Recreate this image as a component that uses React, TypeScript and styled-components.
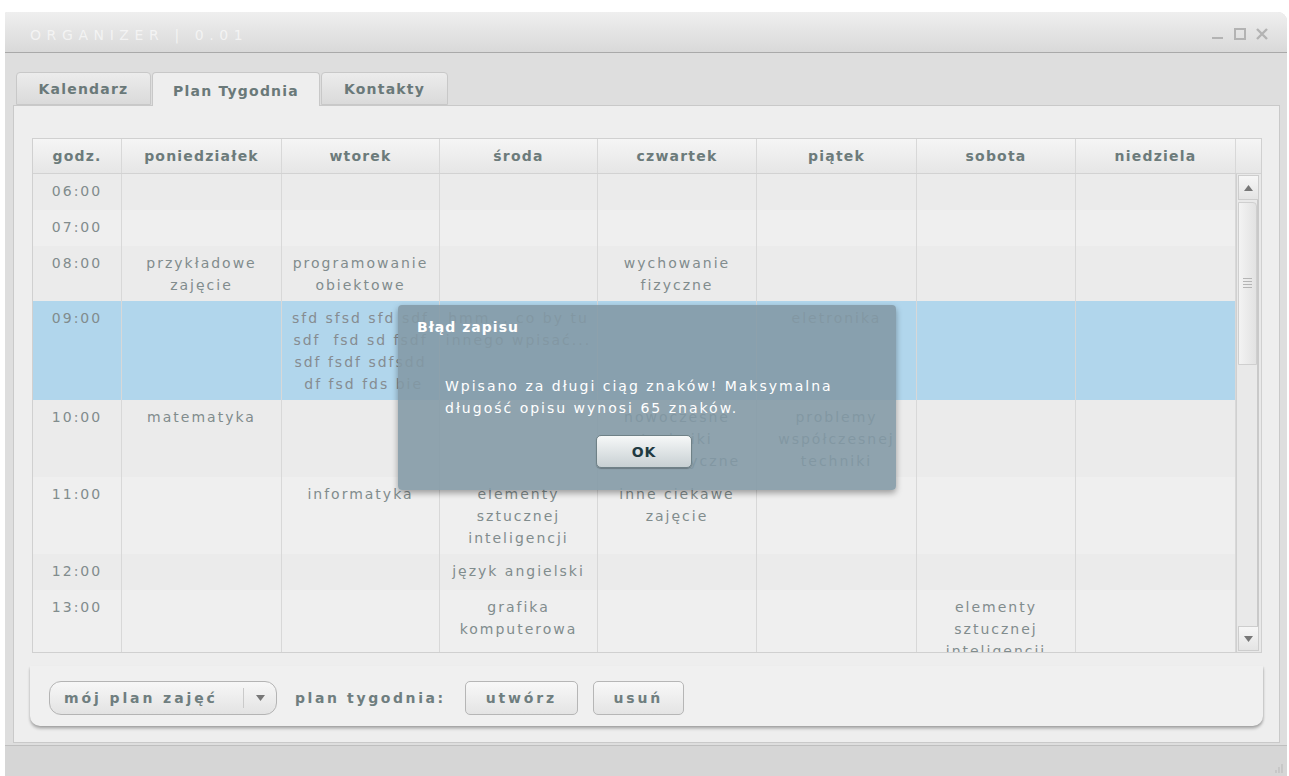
import styled, { createGlobalStyle } from 'styled-components';

const GlobalStyle = createGlobalStyle`
  html, body {
    margin: 0;
    padding: 0;
    background: #ffffff;
  }
  body {
    font-family: "DejaVu Sans", Verdana, sans-serif;
  }
`;

const COLS = '89px 160px 158px 158px 159px 160px 159px 160px';

const days = ['poniedziałek', 'wtorek', 'środa', 'czwartek', 'piątek', 'sobota', 'niedziela'];

type PlanRow = { time: string; cells: string[]; selected?: boolean };

const plan: PlanRow[] = [
  { time: '06:00', cells: ['', '', '', '', '', '', ''] },
  { time: '07:00', cells: ['', '', '', '', '', '', ''] },
  {
    time: '08:00',
    cells: ['przykładowe\nzajęcie', 'programowanie\nobiektowe', '', 'wychowanie\nfizyczne', '', '', ''],
  },
  {
    time: '09:00',
    selected: true,
    cells: [
      '',
      'sfd sfsd sfd sdf\nsdf  fsd sd fsdf\nsdf fsdf sdfsdd\n df fsd fds bie',
      'hmm... co by tu\ninnego wpisać...',
      '',
      'eletronika',
      '',
      '',
    ],
  },
  {
    time: '10:00',
    cells: ['matematyka', '', '', 'nowoczesne\ntechniki\ninformatyczne', 'problemy\nwspółczesnej\ntechniki', '', ''],
  },
  {
    time: '11:00',
    cells: ['', 'informatyka', 'elementy\nsztucznej\ninteligencji', 'inne ciekawe\nzajęcie', '', '', ''],
  },
  { time: '12:00', cells: ['', '', 'język angielski', '', '', '', ''] },
  {
    time: '13:00',
    cells: ['', '', 'grafika\nkomputerowa', '', '', 'elementy\nsztucznej\ninteligencji', ''],
  },
];

const Screen = styled.div`
  position: relative;
  padding: 12px 2px 0 5px;
  height: 776px;
  box-sizing: border-box;
`;

const Window = styled.div`
  display: flex;
  flex-direction: column;
  height: 764px;
  background: #dedede;
  border-radius: 2px 9px 0 0;
  overflow: hidden;
`;

const TitleBar = styled.div`
  height: 40px;
  flex: none;
  display: flex;
  align-items: center;
  justify-content: space-between;
  padding: 0 18px 0 25px;
  background: linear-gradient(#efefef, #d9d9d9);
  border-bottom: 1px solid #a9a9a9;
`;

const Title = styled.div`
  font-size: 14px;
  letter-spacing: 5.6px;
  color: rgba(255, 255, 255, 0.6);
  padding-top: 5px;
`;

const Controls = styled.div`
  display: flex;
  align-items: center;
  gap: 8px;
  padding-top: 4px;
`;

const Body = styled.div`
  flex: 1;
  display: flex;
  flex-direction: column;
  padding: 19px 7px 0 8px;
`;

const TabRow = styled.div`
  display: flex;
  height: 33px;
  padding-left: 3px;
  gap: 1px;
  position: relative;
  z-index: 1;
`;

const Tab = styled.div<{ $active?: boolean; $w: number }>`
  width: ${(p) => p.$w}px;
  box-sizing: border-box;
  display: flex;
  align-items: center;
  justify-content: center;
  padding-top: ${(p) => (p.$active ? 3 : 0)}px;
  font-size: 14px;
  font-weight: bold;
  letter-spacing: 1.2px;
  color: #6a7979;
  border: 1px solid #c8c8c8;
  border-bottom: ${(p) => (p.$active ? 'none' : '1px solid #c8c8c8')};
  border-radius: 4px 4px 0 0;
  background: ${(p) => (p.$active ? '#eeeeee' : 'linear-gradient(#ececec, #dadada)')};
  height: ${(p) => (p.$active ? 34 : 33)}px;
`;

const Panel = styled.div`
  height: 638px;
  box-sizing: border-box;
  background: #eeeeee;
  border: 1px solid #c9c9c9;
  padding: 32px 17px 0 18px;
  display: flex;
  flex-direction: column;
`;

const TableFrame = styled.div`
  border: 1px solid #d0d0d0;
  display: flex;
  flex-direction: column;
  height: 515px;
  box-sizing: border-box;
`;

const HeaderRow = styled.div`
  display: grid;
  grid-template-columns: ${COLS} 1fr;
  height: 35px;
  flex: none;
  background: linear-gradient(#f5f5f5, #e6e6e6);
  border-bottom: 1px solid #d2d2d2;
  box-sizing: border-box;
`;

const HeadCell = styled.div`
  display: flex;
  align-items: center;
  justify-content: center;
  font-size: 14px;
  font-weight: bold;
  letter-spacing: 1.2px;
  color: #6c7b7b;
  border-right: 1px solid #d8d8d8;
  padding-bottom: 1px;
  &:last-child {
    border-right: none;
  }
`;

const BodyArea = styled.div`
  flex: 1;
  display: flex;
  min-height: 0;
`;

const Rows = styled.div`
  flex: 1;
  overflow: hidden;
`;

const Row = styled.div<{ $bg: string }>`
  display: grid;
  grid-template-columns: ${COLS};
  min-height: 36px;
  background: ${(p) => p.$bg};
`;

const Cell = styled.div<{ $dark?: boolean }>`
  border-right: 1px solid #d8d8d8;
  padding: 6px 0 5px;
  font-size: 14px;
  line-height: 22px;
  letter-spacing: 2px;
  color: ${(p) => (p.$dark ? '#868c91' : '#818c8d')};
  text-align: center;
  white-space: pre;
  overflow: hidden;
`;

const Scrollbar = styled.div`
  width: 25px;
  flex: none;
  display: flex;
  flex-direction: column;
  background: #e9e9e9;
  border-left: 1px solid #d0d0d0;
  padding: 1px 2px 1px 1px;
  box-sizing: border-box;
`;

const ScrollButton = styled.div`
  height: 25px;
  flex: none;
  display: flex;
  align-items: center;
  justify-content: center;
  background: linear-gradient(#f6f6f6, #e4e4e4);
  border: 1px solid #cdcdcd;
  box-sizing: border-box;
`;

const Track = styled.div`
  flex: 1;
  padding-top: 2px;
  border-right: 2px solid #c9c9c9;
`;

const Thumb = styled.div`
  height: 163px;
  box-sizing: border-box;
  border: 1px solid #cfcfcf;
  border-radius: 0 4px 0 0;
  background: linear-gradient(90deg, #f3f3f3, #e2e2e2);
  display: flex;
  align-items: center;
  justify-content: center;
`;

const Toolbar = styled.div`
  margin: 13px -1px 0 -2px;
  height: 60px;
  box-sizing: border-box;
  display: flex;
  align-items: center;
  padding: 3px 0 0 19px;
  background: #f0f0f0;
  border-radius: 0 0 10px 10px;
  box-shadow: 0 3px 3px rgba(0, 0, 0, 0.22), -1px 1px 2px rgba(0, 0, 0, 0.05), 1px 1px 2px rgba(0, 0, 0, 0.1);
`;

const Combo = styled.div`
  height: 34px;
  width: 228px;
  box-sizing: border-box;
  display: flex;
  align-items: center;
  border: 1px solid #b4b4b4;
  border-radius: 12px;
  background: linear-gradient(#f7f7f7, #e3e3e3);
  margin-right: 18px;
`;

const ComboText = styled.div`
  flex: 1;
  padding-left: 14px;
  font-size: 14px;
  font-weight: bold;
  letter-spacing: 2.9px;
  color: #6f7e7f;
`;

const ComboArrow = styled.div`
  width: 32px;
  height: 20px;
  border-left: 1px solid #cacaca;
  display: flex;
  align-items: center;
  justify-content: center;
`;

const ToolLabel = styled.div`
  font-size: 14px;
  font-weight: bold;
  letter-spacing: 2.6px;
  color: #6f7e7f;
  margin-right: 19px;
`;

const ToolButton = styled.div<{ $w: number }>`
  width: ${(p) => p.$w}px;
  height: 34px;
  box-sizing: border-box;
  display: flex;
  align-items: center;
  justify-content: center;
  border: 1px solid #b6b6b6;
  border-radius: 5px;
  background: linear-gradient(#f8f8f8, #e4e4e4);
  font-size: 14px;
  font-weight: bold;
  letter-spacing: 2.8px;
  color: #6f7e7f;
  margin-right: 15px;
`;

const StatusBar = styled.div`
  height: 31px;
  flex: none;
  margin-top: 2px;
  background: #d6d6d6;
  border-top: 1px solid #bfbfbf;
  display: flex;
  align-items: flex-end;
  justify-content: flex-end;
  padding: 0 4px 3px 0;
  box-sizing: border-box;
`;

const Dialog = styled.div`
  position: absolute;
  left: 398px;
  top: 305px;
  width: 498px;
  height: 185px;
  box-sizing: border-box;
  background: rgba(130, 153, 165, 0.88);
  border-radius: 4px;
  box-shadow: 0 3px 6px rgba(0, 0, 0, 0.35);
  padding: 11px 19px 0 19px;
  display: flex;
  flex-direction: column;
`;

const DialogTitle = styled.div`
  font-size: 14px;
  font-weight: bold;
  letter-spacing: 1px;
  color: #ffffff;
  line-height: 22px;
`;

const DialogText = styled.div`
  margin-top: 37px;
  padding-left: 28px;
  font-size: 14px;
  line-height: 22px;
  letter-spacing: 2px;
  color: #ffffff;
`;

const OkButton = styled.div`
  align-self: center;
  margin: 16px 0 0 -6px;
  width: 96px;
  height: 33px;
  box-sizing: border-box;
  display: flex;
  align-items: center;
  justify-content: center;
  border: 1px solid #6f8187;
  border-radius: 5px;
  background: linear-gradient(#f6f8f8, #c8d0d3);
  box-shadow: 0 1px 1px rgba(0, 0, 0, 0.25);
  font-size: 14px;
  font-weight: bold;
  letter-spacing: 1px;
  color: #1f3a41;
`;

const Arrow = ({ up }: { up?: boolean }) => (
  <svg width="9" height="6" viewBox="0 0 9 6">
    <path d={up ? 'M0 6 L4.5 0 L9 6 Z' : 'M0 0 L4.5 6 L9 0 Z'} fill="#777" />
  </svg>
);

const Grip = () => (
  <svg width="9" height="12" viewBox="0 0 9 12">
    {[0, 1, 2, 3, 4].map((i) => (
      <rect key={i} x="0" y={i * 3} width="9" height="1" fill="#b5b5b5" />
    ))}
  </svg>
);

const WindowIcons = () => (
  <Controls>
    <svg width="14" height="14" viewBox="0 0 14 14">
      <rect x="1" y="10" width="11" height="2" fill="#b3b3b3" />
    </svg>
    <svg width="14" height="14" viewBox="0 0 14 14">
      <rect x="2" y="2" width="10" height="10" fill="none" stroke="#b3b3b3" strokeWidth="2" />
    </svg>
    <svg width="14" height="14" viewBox="0 0 14 14">
      <path d="M2 2 L12 12 M12 2 L2 12" stroke="#b3b3b3" strokeWidth="2.4" />
    </svg>
  </Controls>
);

const ResizeGrip = () => (
  <svg width="10" height="10" viewBox="0 0 10 10">
    <path d="M9 1 V10 M6 4 V10 M3 7 V10" stroke="#b9b9b9" strokeWidth="1" />
  </svg>
);

export default function App() {
  return (
    <>
      <GlobalStyle />
      <Screen>
        <Window>
          <TitleBar>
            <Title>ORGANIZER | 0.01</Title>
            <WindowIcons />
          </TitleBar>
          <Body>
            <TabRow>
              <Tab $w={135}>Kalendarz</Tab>
              <Tab $w={168} $active>
                Plan Tygodnia
              </Tab>
              <Tab $w={127}>Kontakty</Tab>
            </TabRow>
            <Panel>
              <TableFrame>
                <HeaderRow>
                  <HeadCell>godz.</HeadCell>
                  {days.map((d) => (
                    <HeadCell key={d}>{d}</HeadCell>
                  ))}
                  <HeadCell />
                </HeaderRow>
                <BodyArea>
                  <Rows>
                    {plan.map((r, i) => (
                      <Row key={r.time} $bg={r.selected ? '#b1d6ec' : i % 2 === 0 ? '#ebebeb' : '#efefef'}>
                        <Cell>{r.time}</Cell>
                        {r.cells.map((c, j) => (
                          <Cell key={j} $dark={r.selected}>
                            {c}
                          </Cell>
                        ))}
                      </Row>
                    ))}
                  </Rows>
                  <Scrollbar>
                    <ScrollButton>
                      <Arrow up />
                    </ScrollButton>
                    <Track>
                      <Thumb>
                        <Grip />
                      </Thumb>
                    </Track>
                    <ScrollButton>
                      <Arrow />
                    </ScrollButton>
                  </Scrollbar>
                </BodyArea>
              </TableFrame>
              <Toolbar>
                <Combo>
                  <ComboText>mój plan zajęć</ComboText>
                  <ComboArrow>
                    <Arrow />
                  </ComboArrow>
                </Combo>
                <ToolLabel>plan tygodnia:</ToolLabel>
                <ToolButton $w={113}>utwórz</ToolButton>
                <ToolButton $w={91}>usuń</ToolButton>
              </Toolbar>
            </Panel>
          </Body>
          <StatusBar>
            <ResizeGrip />
          </StatusBar>
        </Window>
        <Dialog>
          <DialogTitle>Błąd zapisu</DialogTitle>
          <DialogText>
            Wpisano za długi ciąg znaków! Maksymalna
            <br />
            długość opisu wynosi 65 znaków.
          </DialogText>
          <OkButton>OK</OkButton>
        </Dialog>
      </Screen>
    </>
  );
}
